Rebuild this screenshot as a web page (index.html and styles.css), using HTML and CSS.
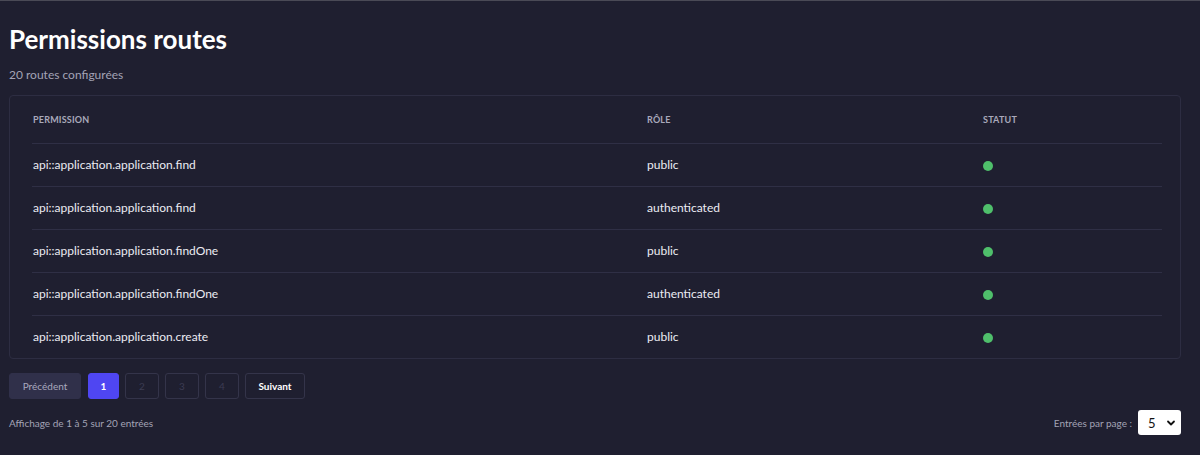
FILE: index.html
```html
<!DOCTYPE html>
<html lang="fr">
<head>
<meta charset="utf-8">
<title>Permissions routes</title>
<link rel="stylesheet" href="styles.css">
</head>
<body>
<div class="page">
  <h1 class="title">Permissions routes</h1>
  <p class="subtitle">20 routes configurées</p>
  <div class="card">
    <table class="table">
      <thead>
        <tr>
          <th class="c-perm">Permission</th>
          <th class="c-role">Rôle</th>
          <th class="c-stat">Statut</th>
        </tr>
      </thead>
      <tbody>
        <tr><td>api::application.application.find</td><td>public</td><td><span class="dot"></span></td></tr>
        <tr><td>api::application.application.find</td><td>authenticated</td><td><span class="dot"></span></td></tr>
        <tr><td>api::application.application.findOne</td><td>public</td><td><span class="dot"></span></td></tr>
        <tr><td>api::application.application.findOne</td><td>authenticated</td><td><span class="dot"></span></td></tr>
        <tr><td>api::application.application.create</td><td>public</td><td><span class="dot"></span></td></tr>
      </tbody>
    </table>
  </div>
  <div class="pager">
    <button class="btn btn-prev">Précédent</button>
    <button class="btn btn-num active">1</button>
    <button class="btn btn-num">2</button>
    <button class="btn btn-num">3</button>
    <button class="btn btn-num">4</button>
    <button class="btn btn-next">Suivant</button>
  </div>
  <div class="footer">
    <span class="info">Affichage de 1 à 5 sur 20 entrées</span>
    <label class="per-page">Entrées par page :
      <span class="select"><span class="sel-val">5</span>
        <svg class="chev" width="10" height="10" viewBox="0 0 10 10"><path d="M2 3.5 L5 6.5 L8 3.5" fill="none" stroke="#111" stroke-width="1.8" stroke-linecap="round" stroke-linejoin="round"/></svg>
      </span>
    </label>
  </div>
</div>
</body>
</html>
```

FILE: styles.css
```css
* { box-sizing: border-box; }
html, body { margin: 0; padding: 0; }
body {
  background: #1f1f30;
  font-family: Lato, "Noto Sans", "Liberation Sans", sans-serif;
  color: #e8e8ef;
  border-top: 1px solid #4a4a56;
  height: 455px;
  overflow: hidden;
}
.page { padding: 0 19px 0 9px; }
.title {
  margin: 0;
  padding-top: 21px;
  font-size: 26px;
  line-height: 34px;
  font-weight: 700;
  color: #ffffff;
}
.subtitle {
  margin: 11px 0 0 0;
  font-size: 12px;
  line-height: 16px;
  color: #a3a3b5;
}
.card {
  margin-top: 12px;
  border: 1px solid #2d2d42;
  border-radius: 4px;
  padding: 0 18px 0 22px;
}
.table {
  width: 100%;
  border-collapse: collapse;
}
.table th {
  text-align: left;
  font-size: 9px;
  font-weight: 700;
  text-transform: uppercase;
  color: #a9a9bb;
  height: 47px;
  padding: 1px 0 0 1px;
  border-bottom: 1px solid #2f2f45;
  letter-spacing: 0.2px;
}
.c-perm { width: 614px; }
.c-role { width: 336px; }
.table td {
  height: 43px;
  padding: 0 0 0 1px;
  font-size: 12px;
  color: #ececf3;
  border-bottom: 1px solid #2f2f45;
}
.table tbody tr:last-child td { border-bottom: none; }
.dot {
  display: inline-block;
  width: 10px;
  height: 10px;
  border-radius: 50%;
  background: #4fbf6b;
  vertical-align: middle;
}
.pager {
  display: flex;
  gap: 6px;
  margin-top: 14px;
}
.btn {
  height: 26px;
  border-radius: 3px;
  font-family: inherit;
  font-size: 10px;
  padding: 0;
  border: 1px solid #34344a;
  background: transparent;
  color: #3c3c52;
}
.btn-prev {
  width: 72px;
  background: #30304a;
  border-color: #30304a;
  color: #a8a8bd;
}
.btn-num { width: 34px; }
.btn-num.active {
  width: 31px;
  margin-left: 1px;
  background: #4f46f2;
  border-color: #4f46f2;
  color: #ffffff;
  font-weight: 700;
}
.btn-next {
  width: 60px;
  color: #ffffff;
  font-weight: 700;
}
.footer {
  display: flex;
  justify-content: space-between;
  align-items: center;
  margin-top: 11px;
}
.info {
  font-size: 10px;
  color: #a3a3b5;
}
.per-page {
  display: flex;
  align-items: center;
  gap: 6px;
  font-size: 10px;
  color: #a3a3b5;
}
.select {
  display: flex;
  align-items: center;
  justify-content: space-between;
  width: 43px;
  height: 25px;
  background: #ffffff;
  border-radius: 3px;
  padding: 0 5px 0 10px;
}
.sel-val { font-size: 13px; color: #111; }
```
